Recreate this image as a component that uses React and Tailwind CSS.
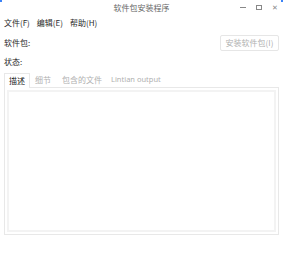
import React from 'react';

export default function App() {
  return (
    <div className="relative w-[283px] h-[260px] bg-white text-[8px] leading-none text-[#2a2a2a] font-['Noto_Sans_CJK_SC','Noto_Sans',sans-serif] overflow-hidden">
      <div className="absolute left-0 top-0 w-[2px] h-[2px] bg-[#3b82f6]" />
      <div className="absolute right-0 top-0 w-[2px] h-[2px] bg-[#3b82f6]" />

      {/* title bar */}
      <div className="relative h-[15px] flex items-center justify-center text-[#666]">
        <span>软件包安装程序</span>
        <div className="absolute right-[5px] top-0 h-[15px] flex items-center gap-[10px]">
          <span className="w-[6px] h-px bg-[#888]" />
          <span className="w-[6px] h-[5px] border border-[#888]" />
          <span className="text-[7px] text-[#888]">✕</span>
        </div>
      </div>

      {/* menu */}
      <div className="h-[15px] flex items-center gap-[7px] px-[4px]">
        <span>文件(F)</span>
        <span>编辑(E)</span>
        <span>帮助(H)</span>
      </div>

      <div className="h-[20px] mt-[3px] flex items-center justify-between px-[4px]">
        <span>软件包:</span>
        <div className="w-[59px] h-[16px] rounded-[2px] border border-[#e6e6e6] flex items-center justify-center text-[#b0b0b0]">
          安装软件包(I)
        </div>
      </div>

      <div className="h-[18px] flex items-center px-[4px]">
        <span>状态:</span>
      </div>

      {/* tabs */}
      <div className="mt-[1px] px-[4px]">
        <div className="flex items-end h-[15px]">
          <div className="h-[15px] w-[26px] border border-b-0 border-[#e8e8e8] flex items-center justify-center text-[#222] bg-white relative top-px">描述</div>
          <div className="ml-[5px] text-[#b0b0b0] h-[15px] flex items-center">细节</div>
          <div className="ml-[11px] text-[#b0b0b0] h-[15px] flex items-center">包含的文件</div>
          <div className="ml-[9px] text-[#b0b0b0] h-[15px] flex items-center text-[7.5px] font-['Noto_Sans',sans-serif]">Lintian output</div>
        </div>
        <div className="h-[148px] border border-[#e8e8e8] p-[2px]">
          <div className="h-full border-2 border-[#f3f3f3]" />
        </div>
      </div>
    </div>
  );
}
